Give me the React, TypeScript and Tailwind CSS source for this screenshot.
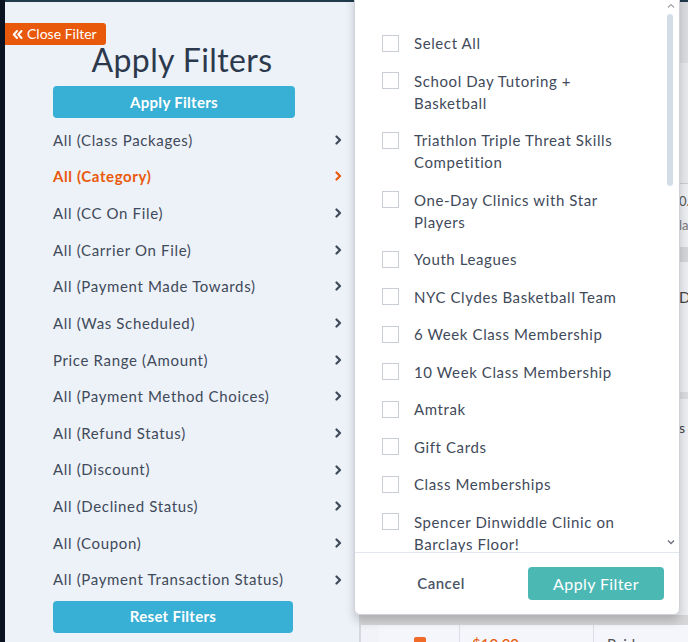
import React from "react";

const FONT = { fontFamily: "Lato, 'Noto Sans', sans-serif" };

const navItems = [
  "All (Class Packages)",
  "All (Category)",
  "All (CC On File)",
  "All (Carrier On File)",
  "All (Payment Made Towards)",
  "All (Was Scheduled)",
  "Price Range (Amount)",
  "All (Payment Method Choices)",
  "All (Refund Status)",
  "All (Discount)",
  "All (Declined Status)",
  "All (Coupon)",
  "All (Payment Transaction Status)",
];

const options: string[][] = [
  ["Select All"],
  ["School Day Tutoring +", "Basketball"],
  ["Triathlon Triple Threat Skills", "Competition"],
  ["One-Day Clinics with Star", "Players"],
  ["Youth Leagues"],
  ["NYC Clydes Basketball Team"],
  ["6 Week Class Membership"],
  ["10 Week Class Membership"],
  ["Amtrak"],
  ["Gift Cards"],
  ["Class Memberships"],
  ["Spencer Dinwiddle Clinic on", "Barclays Floor!"],
];

function Chevron({ color }: { color: string }) {
  return (
    <svg width="7" height="10" viewBox="0 0 7 10" fill="none">
      <path d="M1.5 1.5L5 5L1.5 8.5" stroke={color} strokeWidth="2.2" strokeLinecap="round" strokeLinejoin="round" />
    </svg>
  );
}

export default function App() {
  return (
    <div className="relative w-[688px] h-[642px] overflow-hidden flex bg-[#edf1f8]" style={FONT}>
      {/* dark sidebar strip */}
      <div className="w-[5px] h-full bg-[#0b1322] shrink-0" />

      {/* filter panel */}
      <div className="relative w-[355px] shrink-0 h-full bg-[#edf1f8] border-r border-[#d3d8df] border-t-2 border-t-[#1f3a4a] flex flex-col pl-[48px] pr-[15px]">
        <button className="absolute left-0 top-[21px] h-[22px] w-[101px] bg-[#e8590c] rounded-r-[3px] flex items-center pl-[7px] gap-[4px] text-white text-[14px] leading-none">
          <svg width="11" height="9" viewBox="0 0 11 9" fill="none">
            <path d="M5 1L1.8 4.5L5 8M9.5 1L6.3 4.5L9.5 8" stroke="white" strokeWidth="2" strokeLinecap="round" strokeLinejoin="round" />
          </svg>
          <span>Close Filter</span>
        </button>
        <h1 className="mt-[36px] mb-[5px] h-[43px] text-[32px] leading-[43px] tracking-[0.4px] text-[#2c394d] text-center -ml-[48px] -mr-[15px]">Apply Filters</h1>
        <button className="w-[242px] h-[32px] bg-[#38afd4] rounded-[4px] text-white text-[15px] font-bold tracking-[0.3px]">Apply Filters</button>
        <div className="mt-[3.5px] flex flex-col">
          {navItems.map((t) => {
            const active = t === "All (Category)";
            return (
              <div key={t} className="h-[36.67px] flex items-center justify-between pr-[2px]">
                <span className={active ? "text-[15px] tracking-[0.6px] text-[#e8590c] font-bold" : "text-[15px] tracking-[0.65px] text-[#3f4a5a]"}>{t}</span>
                <Chevron color={active ? "#e8590c" : "#3f4a5a"} />
              </div>
            );
          })}
        </div>
        <button className="mt-[2.5px] w-[240px] h-[32px] bg-[#38afd4] rounded-[4px] text-white text-[15px] font-bold tracking-[0.3px]">Reset Filters</button>
      </div>

      {/* background page */}
      <div className="flex-1 h-full flex flex-col bg-[#eceef1]">
        <div className="h-[2px] shrink-0 bg-[#1f3a4a]" />
        <div className="h-[61px] shrink-0 bg-[#dadce0]" />
        <div className="h-[120px] shrink-0 bg-[#e6e8eb]" />
        <div className="h-[1px] shrink-0 bg-[#c8cbcf]" />
        <div className="h-[63px] shrink-0 flex flex-col items-end text-[13px] text-[#555] overflow-hidden">
          <div className="w-[9px] overflow-hidden whitespace-nowrap mt-[8px]">0.0</div>
          <div className="w-[9px] overflow-hidden whitespace-nowrap mt-[4px] text-[#777]">la</div>
        </div>
        <div className="h-[15px] shrink-0 bg-[#d3d5d9]" />
        <div className="h-[130px] shrink-0 flex flex-col items-end text-[15px] text-[#444]">
          <div className="w-[9px] overflow-hidden whitespace-nowrap mt-[24px]">Da</div>
        </div>
        <div className="h-[7px] shrink-0 bg-[#d9dbde]" />
        <div className="h-[216px] shrink-0 flex flex-col items-end text-[14px] text-[#444]">
          <div className="w-[9px] overflow-hidden whitespace-nowrap mt-[18px]">s</div>
        </div>
        <div className="h-[10px] shrink-0 bg-[#d6d6d8]" />
        <div className="flex-1 min-h-0 overflow-hidden flex bg-[#f5f6fb] border-l border-[#d5d8de]">
          <div className="w-[18px] bg-[#f1f3f8]" />
          <div className="w-[81px] border-r border-[#dcdfe5] relative">
            <div className="absolute left-[35px] top-[12px] w-[12px] h-[6px] bg-[#f06a2a] rounded-t-[2px]" />
          </div>
          <div className="w-[134px] border-r border-[#dcdfe5] pl-[12px] pt-[10px] text-[15px] leading-[18px] text-[#e8590c]">$10.00</div>
          <div className="flex-1 pl-[13px] pt-[10px] text-[15px] leading-[18px] text-[#555]">Paid</div>
        </div>
      </div>

      {/* popup */}
      <div className="absolute left-[354px] top-[-10px] w-[326px] h-[625px] bg-white border border-[#cfd3d8] rounded-b-[6px] shadow-[0_6px_10px_rgba(0,0,0,0.18)] flex flex-col">
        <div className="relative h-[561px] overflow-hidden">
          <div className="pt-[41px] pl-[27px] flex flex-col gap-[15.5px]">
            {options.map((lines) => (
              <div key={lines[0]} className="flex items-start">
                <div className="mt-[2.5px] w-[17px] h-[17px] border border-[#c9ced4] bg-white shrink-0" />
                <div className="ml-[15px] text-[15px] leading-[22px] tracking-[0.6px] text-[#3f4a5a] whitespace-nowrap">
                  {lines.map((l) => (
                    <div key={l}>{l}</div>
                  ))}
                </div>
              </div>
            ))}
          </div>
          {/* scrollbar */}
          <svg className="absolute left-[312px] top-[12px]" width="8" height="6" viewBox="0 0 8 6" fill="none">
            <path d="M1 4.5L4 1.5L7 4.5" stroke="#a0a4aa" strokeWidth="1.2" />
          </svg>
          <div className="absolute left-[312px] top-[23px] w-[6px] h-[172px] rounded-full bg-[#d3dde8]" />
          <svg className="absolute left-[312px] top-[548px]" width="8" height="6" viewBox="0 0 8 6" fill="none">
            <path d="M1 1.5L4 4.5L7 1.5" stroke="#6b7078" strokeWidth="1.3" />
          </svg>
        </div>
        <div className="flex-1 border-t border-[#e3e8ef] flex items-center pl-[28px] pr-[15px]">
          <button className="w-[116px] text-center text-[15px] tracking-[0.5px] text-[#4b5566] font-semibold">Cancel</button>
          <div className="flex-1" />
          <button className="w-[136px] h-[33px] bg-[#4bb8b4] rounded-[4px] text-white text-[16px] tracking-[0.4px]">Apply Filter</button>
        </div>
      </div>
    </div>
  );
}
